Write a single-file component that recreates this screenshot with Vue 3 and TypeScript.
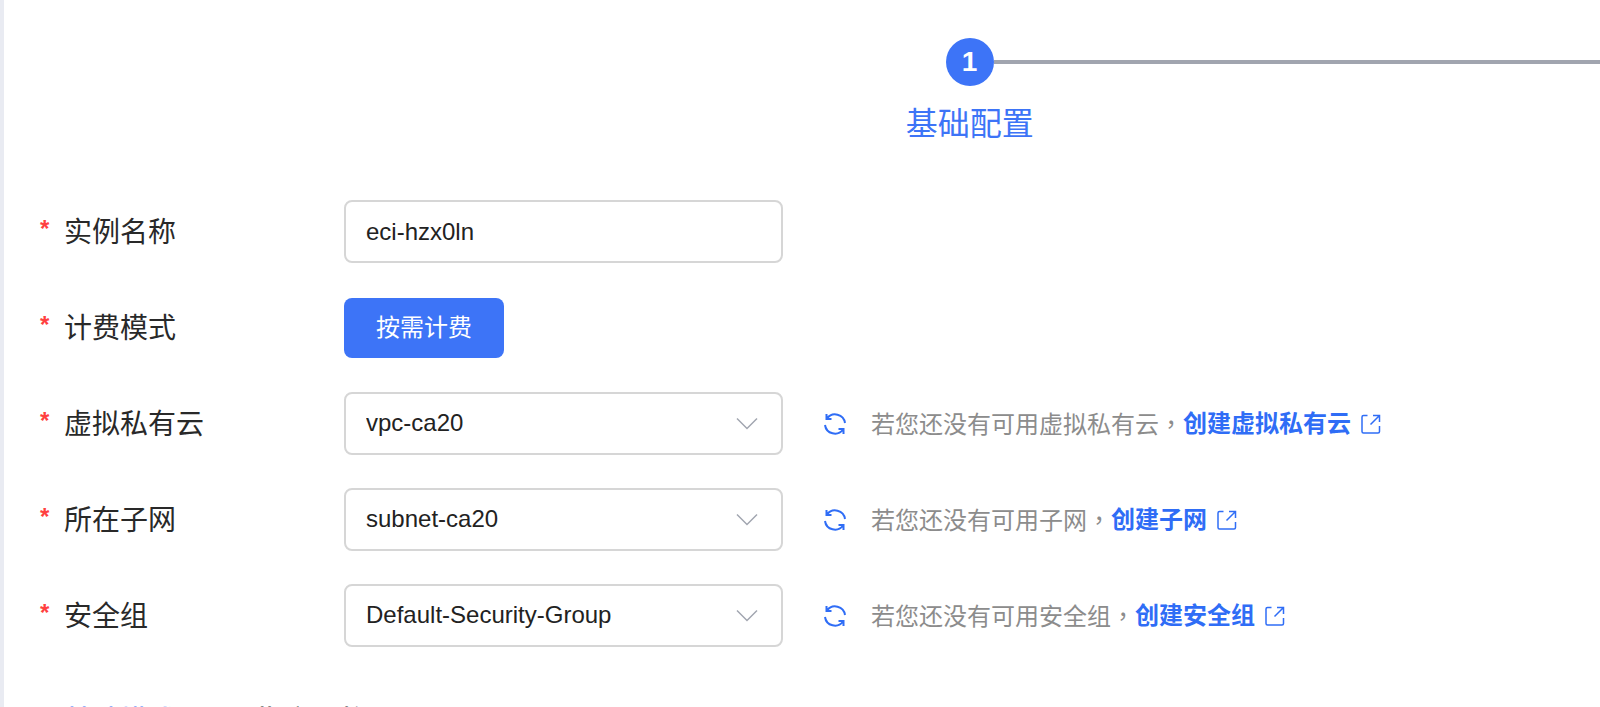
<script setup lang="ts">
import { ref } from 'vue'

interface PickerRow {
  id: string
  label: string
  options: string[]
  hint: string
  link: string
}

const instanceName = ref('eci-hzx0ln')

const rows: PickerRow[] = [
  { id: 'vpc', label: '虚拟私有云', options: ['vpc-ca20'], hint: '若您还没有可用虚拟私有云', link: '创建虚拟私有云' },
  { id: 'subnet', label: '所在子网', options: ['subnet-ca20'], hint: '若您还没有可用子网', link: '创建子网' },
  { id: 'group', label: '安全组', options: ['Default-Security-Group'], hint: '若您还没有可用安全组', link: '创建安全组' },
]
</script>

<template>
  <main class="page">
    <ol class="steps">
      <li class="step">
        <span class="step-number">1</span>
        <span class="step-title">基础配置</span>
      </li>
      <li class="step-line" aria-hidden="true"></li>
    </ol>

    <form class="form" @submit.prevent>
      <div class="row">
        <label class="label" for="name"><span class="star">*</span>实例名称</label>
        <input id="name" v-model="instanceName" class="field" type="text" />
      </div>
      <div class="row">
        <label class="label" for="billing"><span class="star">*</span>计费模式</label>
        <button id="billing" class="billing" type="button">按需计费</button>
      </div>
      <div v-for="row in rows" :key="row.id" class="row">
        <label class="label" :for="row.id"><span class="star">*</span>{{ row.label }}</label>
        <div class="picker">
          <select :id="row.id" class="field">
            <option v-for="option in row.options" :key="option">{{ option }}</option>
          </select>
          <svg class="chevron" viewBox="0 0 22 14" aria-hidden="true"><path d="M1 1.500 11 11.500 21 1.500" /></svg>
        </div>
        <button class="refresh" type="button" aria-label="刷新">
          <svg viewBox="0 0 24 24" aria-hidden="true">
            <path d="M4 6.500A10 10 0 0 1 22 11M3.500 2V7H8.500M20 17.500A10 10 0 0 1 2 13M20.500 22V17H15.500" />
          </svg>
        </button>
        <p class="hint">{{ row.hint }}<span class="comma">，</span></p>
        <a class="link" href="#">
          {{ row.link }}
          <svg viewBox="0 0 20 20" aria-hidden="true"><path d="M6.500 1.500H2.500Q1 1.500 1 3V17.500Q1 19 2.500 19H17Q18.500 19 18.500 17.500V12M12 1.500H18.500V8M18.500 1.500 9.500 10.500" /></svg>
        </a>
      </div>
    </form>

    <nav class="modes">
      <a class="mode active" href="#">基础模式</a>
      <a class="mode" href="#">指定规格</a>
    </nav>
  </main>
</template>

<style>
html,
body,
#app {
  height: 100%;
  overflow: hidden;
}
</style>

<style scoped>
.page {
  box-sizing: border-box;
  min-height: 100%;
  border-left: 4px solid #e9ebf2;
  padding-top: 38px;
  background: #fff;
  color: #292929;
  font-family: "Liberation Sans", "Noto Sans CJK SC", sans-serif;
}
.steps {
  display: flex;
  margin: 0;
  padding: 0 0 0 59%;
  list-style: none;
}
.step {
  display: flex;
  flex-direction: column;
  align-items: center;
  width: 48px;
  gap: 14px;
  color: #3d74f7;
}
.step-number {
  width: 48px;
  border-radius: 50%;
  background: #3d74f7;
  color: #fff;
  font-size: 28px;
  font-weight: 700;
  line-height: 48px;
  text-align: center;
}
.step-title {
  font-size: 32px;
  line-height: 48px;
  white-space: nowrap;
}
.step-line {
  flex: 1;
  height: 4px;
  margin-top: 22px;
  background: #a1a5af;
}
.form {
  display: grid;
  gap: 33px;
  padding: 52px 0 0 36px;
}
.row {
  display: flex;
  align-items: center;
  height: 63px;
}
.label {
  display: flex;
  align-items: center;
  flex: none;
  width: 304px;
  padding-top: 2px;
  font-size: 28px;
  line-height: 40px;
}
.star {
  width: 24px;
  color: #ff4040;
  font-size: 24px;
  font-weight: 700;
  line-height: 32px;
  padding-bottom: 8px;
}
.field {
  box-sizing: border-box;
  width: 439px;
  height: 63px;
  margin: 0;
  border: 2px solid #d6d6d6;
  border-radius: 8px;
  padding: 0 20px;
  background: #fff;
  color: #222;
  font: inherit;
  font-size: 24px;
  appearance: none;
}
.billing {
  height: 60px;
  border: 0;
  border-radius: 8px;
  padding: 0 32px 4px;
  background: #3d74f7;
  color: #fff;
  font: inherit;
  font-size: 24px;
}
.picker {
  position: relative;
  display: flex;
  flex: none;
}
.picker .field {
  padding-bottom: 2px;
}
.chevron {
  position: absolute;
  top: 25px;
  right: 25px;
  width: 22px;
  height: 14px;
  pointer-events: none;
}
svg {
  fill: none;
  stroke: currentColor;
  stroke-width: 1.5;
}
.chevron {
  color: #a2a6b0;
}
.refresh {
  display: flex;
  margin: 0 24px 0 40px;
  border: 0;
  padding: 0;
  background: none;
  color: #2f6df6;
}
.refresh svg {
  width: 24px;
  height: 24px;
  stroke-width: 2;
}
.hint {
  margin: 0;
  color: #8c8c8c;
  font-size: 24px;
  line-height: 36px;
  white-space: nowrap;
}
.comma {
  font-family: "Noto Sans CJK TC", sans-serif;
}
.link {
  display: flex;
  align-items: center;
  gap: 10px;
  color: #2f6df6;
  font-size: 24px;
  font-weight: 700;
  line-height: 36px;
  text-decoration: none;
  white-space: nowrap;
}
.link svg {
  width: 20px;
  height: 20px;
}
.modes {
  display: flex;
  gap: 80px;
  padding: 55px 0 0 60px;
}
.mode {
  color: #222;
  font-size: 28px;
  font-weight: 500;
  line-height: 40px;
  text-decoration: none;
}
.mode.active {
  color: #3d74f7;
}
</style>
